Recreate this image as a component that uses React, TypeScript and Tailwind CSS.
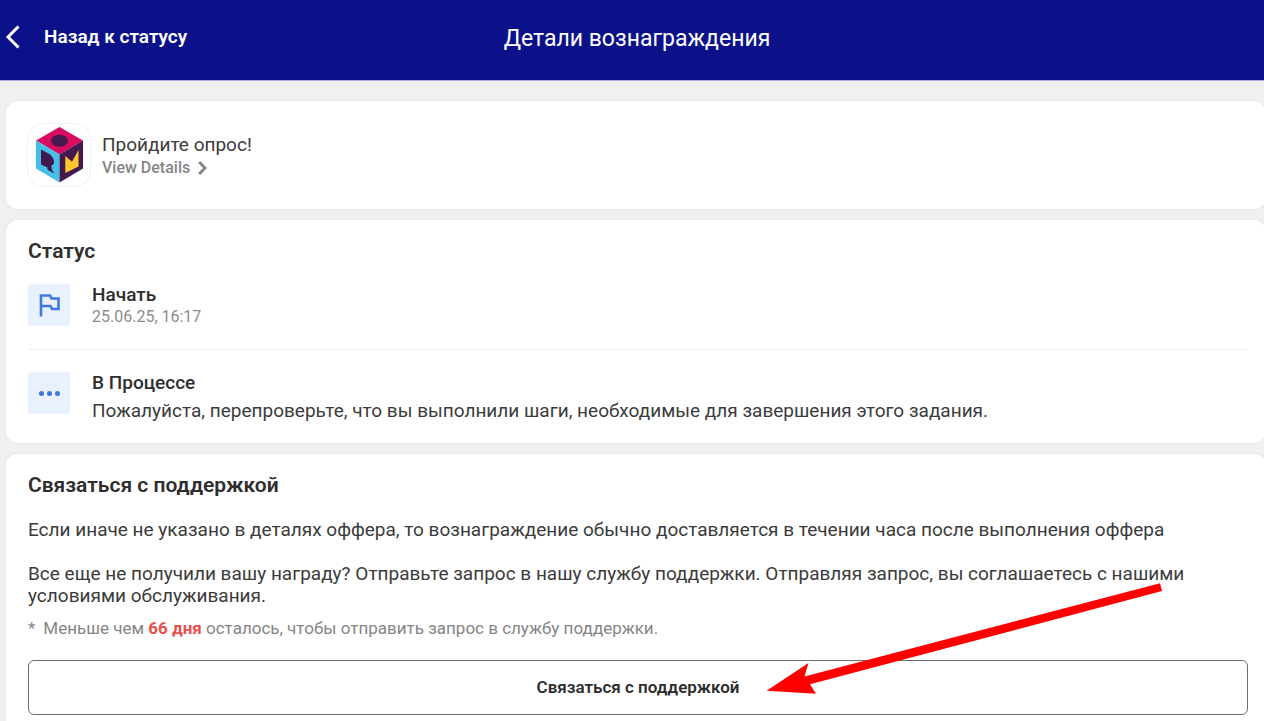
import type { ReactNode } from "react";

function Card({ children, className = "" }: { children: ReactNode; className?: string }) {
  return (
    <section className={`rounded-xl bg-white pr-[18px] pl-[22px] shadow-[0_0_3px_rgba(0,0,0,0.06)] ${className}`}>
      {children}
    </section>
  );
}

function CubeLogo() {
  return (
    <svg viewBox="1 1 62 62" className="size-full" aria-hidden="true">
      <path d="M32.500 4 56 17.500 32.500 31.500 9 17.500Z" fill="#d80b62" />
      <path d="M9 17.500 32.500 31.500V59.500L9 45.500Z" fill="#43bfe8" />
      <path d="M56 17.500 32.500 31.500V59.500L56 45.500Z" fill="#431a4d" />
      <ellipse cx="32.500" cy="17.800" rx="8.500" ry="6" fill="#431a4d" />
      <path d="M14 26.500 21.500 30.500Q27 34 27 39Q27 42 24.200 42.500Q24.500 47 27.300 50.500L21 47Q20 46 20.500 44.500L14 41.500Z" fill="#431a4d" />
      <path d="M38.300 33 45 38.700 51.500 27V43.500L38.300 50Z" fill="#fdc62f" />
    </svg>
  );
}

function Arrow() {
  return (
    <svg
      viewBox="0 0 400 112"
      className="pointer-events-none absolute top-[582px] left-[764px] h-28 w-[400px]"
      aria-hidden="true"
    >
      <path d="M396 1.200 398 9 46 102.200 52 111.700 2.500 108.700 44.500 81 40.500 94.500Z" fill="#f00" />
    </svg>
  );
}

export default function App() {
  return (
    <div className="relative min-h-screen overflow-hidden bg-[#f0f0f0] font-[Roboto,sans-serif] text-[#3b3b3b]">
      <header className="-mr-2.5 grid h-[81px] grid-cols-[1fr_auto_1fr] items-center border-b border-[#a9a9da] bg-[#0b1289] pb-1.5 text-white">
        <a href="#status" className="flex items-center gap-6 pl-1 text-[19px] font-semibold">
          <svg viewBox="0 0 16 24" className="h-6 w-4" fill="none" stroke="currentColor" strokeWidth="3" aria-hidden="true">
            <path d="M14.500 1.500 4 12 14.500 22.500" />
          </svg>
          Назад к статусу
        </a>
        <h1 className="pt-1 text-[23px] leading-7">Детали вознаграждения</h1>
      </header>

      <main className="mt-5 -mr-0.5 ml-1.5 flex flex-col gap-[11px]">
        <Card className="flex items-start gap-[11px] py-[22px]">
          <div className="-ml-px size-16 rounded-2xl border border-[#f2f2f2]">
            <CubeLogo />
          </div>
          <div className="pt-2.5">
            <p className="text-[19px] leading-6">Пройдите опрос!</p>
            <a href="#details" className="flex items-center gap-2 text-base leading-[22px] font-medium text-[#858585]">
              View Details
              <svg viewBox="0 0 9 14" className="h-3.5 w-[9px]" fill="none" stroke="currentColor" strokeWidth="2.800" aria-hidden="true">
                <path d="M1.200 1 7 7 1.200 13" />
              </svg>
            </a>
          </div>
        </Card>

        <Card className="pt-4 pb-5">
          <h2 className="text-[21px] leading-[30px] font-semibold text-[#2e2e2e]">Статус</h2>
          <ul>
            <li className="flex items-start gap-[22px] border-b border-[#eeeeee] pt-[18px] pb-[21px]">
              <span className="flex size-[42px] items-center justify-center rounded bg-[#e9f0fe]">
                <svg viewBox="0 0 24 24" className="size-6" fill="none" stroke="#3f78e0" strokeWidth="2.600" aria-hidden="true">
                  <path d="M4 23.500V2.500H13L14.500 5.500H21.500V16H15L13.500 13H4" />
                </svg>
              </span>
              <div>
                <h3 className="text-[19px] leading-[22px] font-medium text-[#2e2e2e]">Начать</h3>
                <p className="text-base leading-[22px] text-[#8c8c8c]">25.06.25, 16:17</p>
              </div>
            </li>
            <li className="flex items-start gap-[22px] pt-[22px]">
              <span className="flex size-[42px] shrink-0 items-center justify-center gap-[3px] rounded bg-[#e9f0fe]">
                <i className="size-[5px] rounded-full bg-[#3f78e0]" />
                <i className="size-[5px] rounded-full bg-[#3f78e0]" />
                <i className="size-[5px] rounded-full bg-[#3f78e0]" />
              </span>
              <div>
                <h3 className="text-[19px] leading-[22px] font-medium text-[#2e2e2e]">В Процессе</h3>
                <p className="pt-[5px] text-[19px] leading-6">
                  Пожалуйста, перепроверьте, что вы выполнили шаги, необходимые для завершения этого задания.
                </p>
              </div>
            </li>
          </ul>
        </Card>

        <Card className="pt-4 pb-5">
          <h2 className="text-[21px] leading-[30px] font-semibold text-[#2e2e2e]">Связаться с поддержкой</h2>
          <p className="mt-[19px] text-[19px] leading-[22px]">
            Если иначе не указано в деталях оффера, то вознаграждение обычно доставляется в течении часа после выполнения оффера
          </p>
          <p className="mt-[22px] text-[19px] leading-[22px]">
            Все еще не получили вашу награду? Отправьте запрос в нашу службу поддержки. Отправляя запрос, вы соглашаетесь с нашими условиями обслуживания.
          </p>
          <p className="mt-[11px] flex gap-2 text-[17px] leading-5 text-[#858585]">
            <span>*</span>
            <span>
              Меньше чем <strong className="font-bold text-[#e8504f]">66 дня</strong> осталось, чтобы отправить запрос в службу поддержки.
            </span>
          </p>
          <button
            type="button"
            className="mt-[22px] h-[55px] w-full rounded-md border border-[#6e6e6e] bg-white text-[17px] font-semibold text-[#2e2e2e]"
          >
            Связаться с поддержкой
          </button>
        </Card>
      </main>
      <Arrow />
    </div>
  );
}
